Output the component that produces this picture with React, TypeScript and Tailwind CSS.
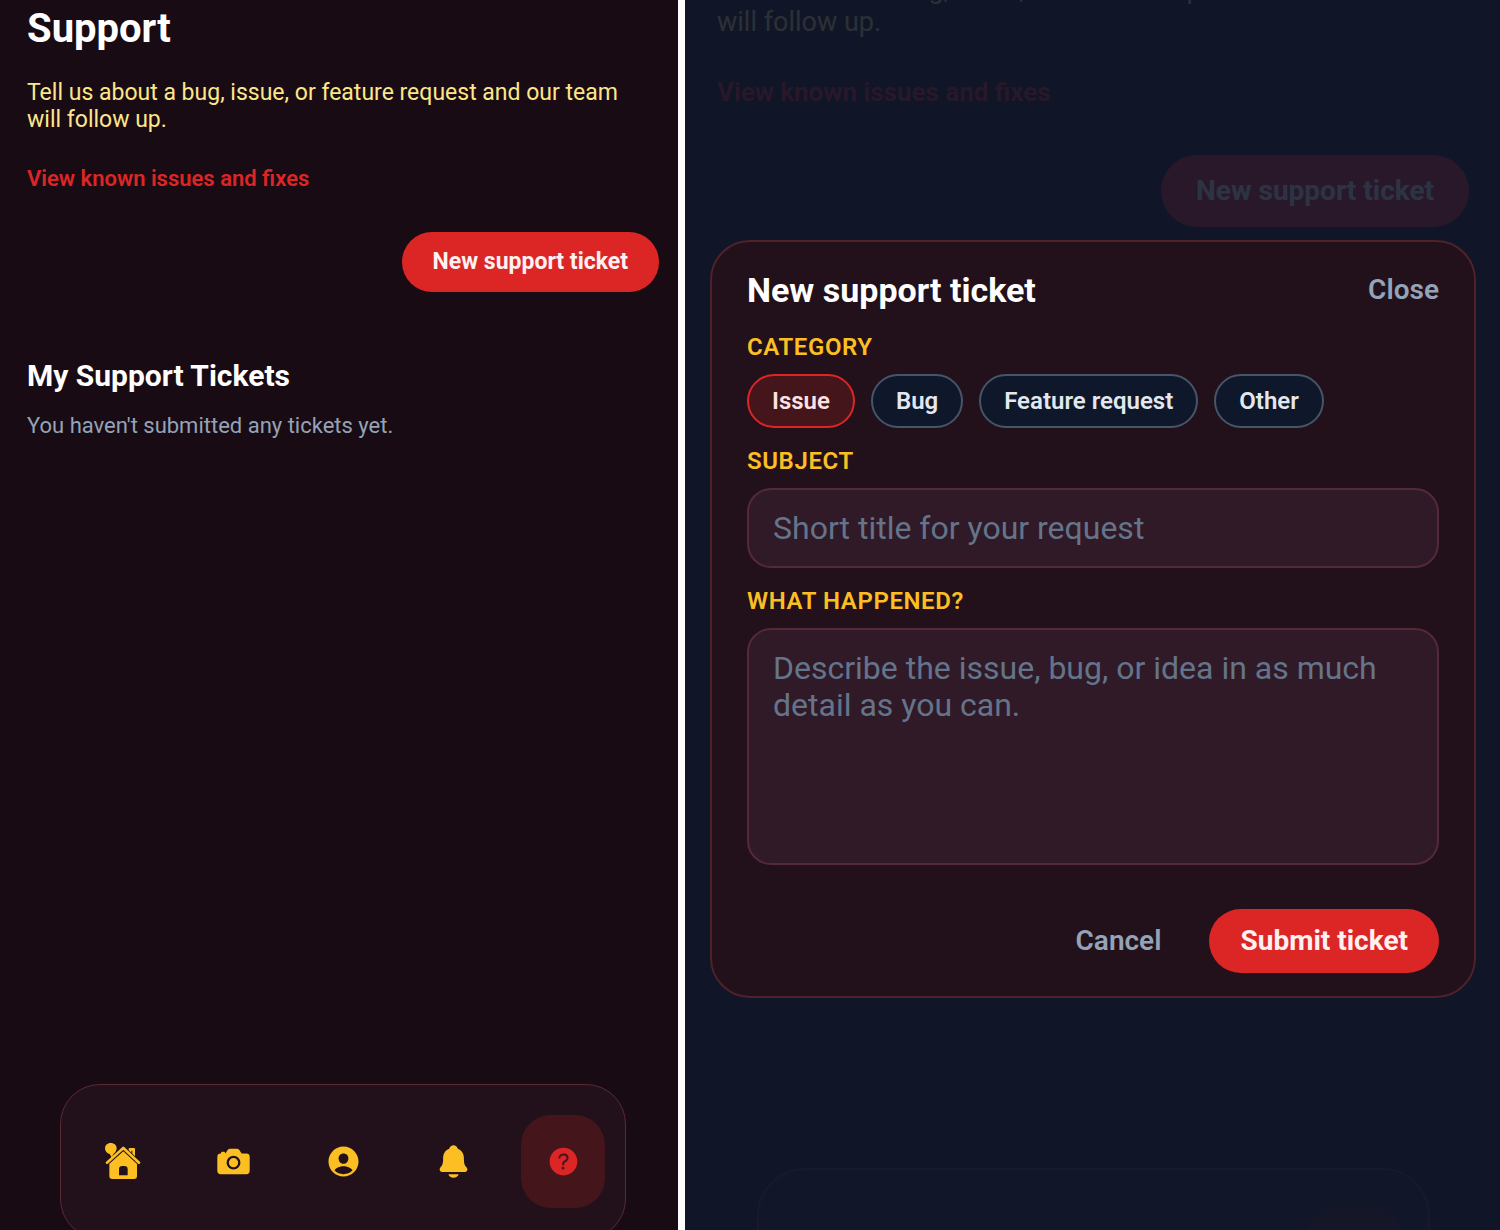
import React, { useState } from 'react'
import { IoCamera, IoHelpCircle, IoNotifications, IoPersonCircle } from 'react-icons/io5'

const categories = ['Issue', 'Bug', 'Feature request', 'Other']

const HouseIcon = ({ className }: { className?: string }) => (
  <svg viewBox="0 0 111 111" className={className} fill="currentColor" aria-hidden="true">
    <path fillRule="evenodd" d="M71 18q0-3 3-3h13q3 0 3 3v32L71 33ZM79 23v11l3 3V23Z" />
    <path
      fillRule="evenodd"
      d="M55 25 96 62v37q0 9-9 9H22q-9 0-9-9V62ZM42 97h26V79q0-10-10-10h-6q-10 0-10 10Z"
    />
    <path d="M6 59 55 15l47 44" fill="none" stroke="#22111a" strokeWidth="12" strokeLinejoin="round" />
    <path d="M17 0C28 0 35 7 35 16c0 8-5 13-9 16l-6 11-6-10C5 31 0 24 0 16 0 7 7 0 17 0Z" />
    <path
      d="M6 59 55 15l47 44"
      fill="none"
      stroke="currentColor"
      strokeWidth="8"
      strokeLinecap="round"
      strokeLinejoin="round"
    />
  </svg>
)

const tabs = [
  { label: 'Home', Icon: HouseIcon },
  { label: 'Camera', Icon: IoCamera },
  { label: 'Profile', Icon: IoPersonCircle },
  { label: 'Notifications', Icon: IoNotifications },
  { label: 'Support', Icon: IoHelpCircle },
]

const SupportPage = () => {
  return (
    <section className="relative h-full overflow-hidden bg-[#190b13]">
      <div className="flex flex-col pt-[5px] pr-[19px] pl-[27px]">
        <h1 className="text-[40px] leading-[48px] font-bold text-white">Support</h1>
        <p className="mt-[26px] pr-8 text-[23px] leading-[27px] text-[#fde68a]">
          Tell us about a bug, issue, or feature request and our team will follow up.
        </p>
        <a href="#known-issues" className="mt-8 text-[22px] leading-7 font-semibold text-[#dc2626]">
          View known issues and fixes
        </a>
        <button
          type="button"
          className="mt-[39px] h-[60px] self-end rounded-full bg-[#dc2626] px-[31px] text-[23px] font-bold text-[#fff1f2]"
        >
          New support ticket
        </button>
        <h2 className="mt-[66px] text-[30px] leading-9 font-bold text-white">My Support Tickets</h2>
        <p className="mt-[18px] text-[22px] leading-7 text-[#94a3b8]">You haven't submitted any tickets yet.</p>
      </div>

      <nav className="absolute right-[52px] -bottom-[9px] left-[60px] flex h-[155px] items-center justify-between rounded-[40px] border border-[#5a2a35] bg-[#22111a] px-5">
        {tabs.map(({ label, Icon }) => (
          <button
            key={label}
            type="button"
            aria-label={label}
            className={
              label === 'Support'
                ? 'flex h-[93px] w-[84px] items-center justify-center rounded-[30px] bg-[#45151c] text-[#dc2626]'
                : 'flex h-[93px] w-[84px] items-center justify-center text-[#fbbf24]'
            }
          >
            <Icon className="size-[37px]" />
          </button>
        ))}
      </nav>
    </section>
  )
}

// The scrolled support page that stays visible behind the dialog
const DimmedPage = () => {
  return (
    <div aria-hidden="true" className="relative h-full overflow-hidden bg-[#190b13]">
      <div className="-mt-[27px] flex flex-col pr-[31px] pl-8">
        <p className="pr-10 text-[27px] leading-[33px] text-[#fde68a]">
          Tell us about a bug, issue, or feature request and our team will follow up.
        </p>
        <p className="mt-9 text-[26px] leading-[34px] font-semibold text-[#dc2626]">View known issues and fixes</p>
        <div className="mt-[46px] flex h-[72px] items-center self-end rounded-full bg-[#dc2626] px-[35px] text-[28px] font-bold text-white">
          New support ticket
        </div>
      </div>
      <div className="absolute right-[70px] -bottom-[124px] left-[72px] flex h-[186px] items-center justify-end rounded-[48px] border-2 border-[#5a2a35] bg-[#22111a] px-6">
        <div className="h-[110px] w-[100px] rounded-[36px] bg-[#45151c]" />
      </div>
    </div>
  )
}

const TicketDialog = () => {
  const [category, setCategory] = useState('Issue')
  const label = 'mt-[19px] text-[24px] leading-7 font-semibold tracking-wide text-[#fbbf24]'
  const field =
    'mt-[13px] w-full resize-none rounded-3xl border-2 border-[#54293a] bg-[#311a27] px-6 text-[32px] leading-[37px] text-white placeholder:text-[#64748b]'

  return (
    <div
      role="dialog"
      aria-labelledby="dialog-title"
      className="flex w-full flex-col rounded-[40px] border-2 border-[#4f222b] bg-[#22111a] px-[35px] pt-6 pb-[23px]"
    >
      <div className="flex h-12 items-center justify-between">
        <h2 id="dialog-title" className="text-[34px] font-bold text-white">
          New support ticket
        </h2>
        <button type="button" className="text-[28px] font-semibold text-[#94a3b8]">
          Close
        </button>
      </div>

      <span id="category-label" className={label}>
        CATEGORY
      </span>
      <div role="group" aria-labelledby="category-label" className="mt-[13px] flex flex-wrap gap-4">
        {categories.map((name) => (
          <button
            key={name}
            type="button"
            aria-pressed={name === category}
            onClick={() => setCategory(name)}
            className={
              name === category
                ? 'h-[54px] rounded-full border-2 border-[#dc2626] bg-[#45151c] px-[23px] text-[24px] font-semibold text-[#fee2e2]'
                : 'h-[54px] rounded-full border-2 border-[#475569] bg-[#0f172a] px-[23px] text-[24px] font-semibold text-[#e2e8f0]'
            }
          >
            {name}
          </button>
        ))}
      </div>

      <label htmlFor="subject" className={label}>
        SUBJECT
      </label>
      <input id="subject" type="text" placeholder="Short title for your request" className={`${field} h-20`} />

      <label htmlFor="details" className={label}>
        WHAT HAPPENED?
      </label>
      <textarea
        id="details"
        placeholder="Describe the issue, bug, or idea in as much detail as you can."
        className={`${field} h-[237px] py-5`}
      />

      <div className="mt-11 flex items-center justify-end gap-12">
        <button type="button" className="text-[28px] font-semibold text-[#94a3b8]">
          Cancel
        </button>
        <button type="button" className="h-16 rounded-full bg-[#dc2626] px-[31px] text-[28px] font-bold text-[#fff1f2]">
          Submit ticket
        </button>
      </div>
    </div>
  )
}

const App = () => {
  return (
    <main className="grid h-screen grid-cols-[678fr_815fr] gap-[7px] bg-white font-['Roboto',sans-serif]">
      <SupportPage />
      <section className="relative h-full overflow-hidden">
        <DimmedPage />
        <div className="absolute inset-0 flex items-center bg-[#0f172a]/88 pt-2 pr-6 pl-[25px]">
          <TicketDialog />
        </div>
      </section>
    </main>
  )
}

export default App
